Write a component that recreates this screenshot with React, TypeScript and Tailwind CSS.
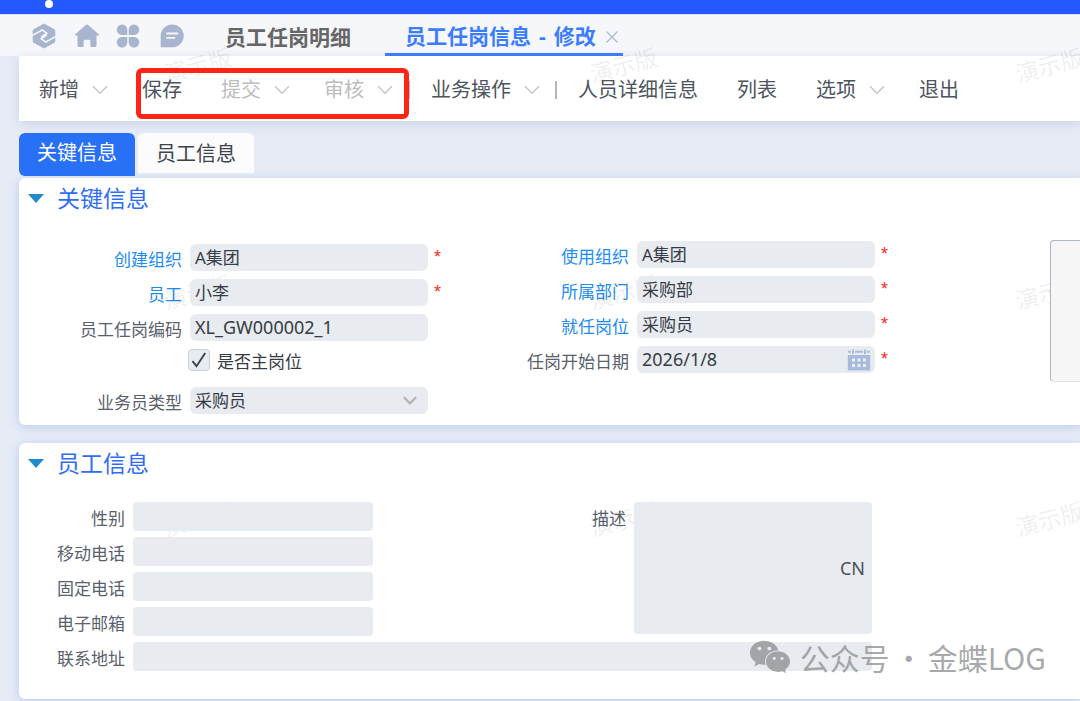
import { useState, type ReactNode } from "react";
import { FaWeixin } from "react-icons/fa";

function SyncIcon() {
  return (
    <svg viewBox="0 0 24 26" className="h-[26px] w-6" aria-hidden="true">
      <path
        d="M11.100.9q.9-.6 1.800 0l9.500 5.300q.9.5.9 1.500v10.600q0 1-.9 1.500l-9.500 5.300q-.9.5-1.800 0l-9.500-5.300q-.9-.5-.9-1.500V7.700q0-1 .9-1.500z"
        fill="currentColor"
      />
      <path
        d="M0 12.500 10.200 7l4.600 3.200-5.600 4M24 13.500 13.800 19l-4.600-3.200 5.600-4"
        fill="none"
        stroke="#f5f7fb"
        strokeWidth="1.500"
      />
    </svg>
  );
}

function HomeIcon() {
  return (
    <svg viewBox="0 0 26 24" className="h-6 w-[26px]" aria-hidden="true">
      <path
        d="M12.100.8q.9-.8 1.800 0l11 9.600q.8.8-.2 1.200h-2.200v10q0 1.400-1.400 1.400h-4.700v-5.800q0-1.400-1.400-1.400h-4q-1.400 0-1.400 1.400V23H4.900q-1.400 0-1.400-1.400v-10H1.300q-1-.4-.2-1.200z"
        fill="currentColor"
      />
    </svg>
  );
}

function AppsIcon() {
  return (
    <svg viewBox="0 0 24 24" className="h-6 w-6" aria-hidden="true">
      <g fill="currentColor">
        <path d="M6 .5a5.300 5.300 0 0 1 5.300 5.300V11H6A5.250 5.250 0 0 1 6 .5z" />
        <path d="M18 .5a5.250 5.250 0 0 1 0 10.500h-5.300V5.800A5.300 5.300 0 0 1 18 .5z" />
        <path d="M6 13h5.300v5.200A5.300 5.300 0 1 1 6 13z" />
        <path d="M12.700 13H18a5.300 5.300 0 1 1-5.300 5.200z" />
      </g>
    </svg>
  );
}

function ChatIcon() {
  return (
    <svg viewBox="0 0 24 24" className="h-6 w-6" aria-hidden="true">
      <path d="M12.300.5a11.300 11.300 0 0 1 0 22.800H2q-1.300 0-1.300-1.300V12A11.500 11.500 0 0 1 12.300.5z" fill="currentColor" />
      <path d="M7 9.500h10.500M7 13.800h7.500" stroke="#f5f7fb" strokeWidth="1.800" strokeLinecap="round" />
    </svg>
  );
}

function Chevron({ className }: { className: string }) {
  return (
    <svg viewBox="0 0 16 10" className={className} aria-hidden="true">
      <path d="M1 1.200 8 8.300 15 1.200" fill="none" stroke="currentColor" />
    </svg>
  );
}

function CalendarIcon() {
  return (
    <svg viewBox="0 0 24 22" className="h-[22px] w-6" aria-hidden="true">
      <path
        d="M1 2.800h3M8 2.800h8M20 2.800h3M6 .5v4.500M18 .5v4.500"
        stroke="#a9bbdc"
        strokeWidth="2"
      />
      <path d="M.8 6h22.400v15.500H.8z" fill="#a9bbdc" />
      <path
        d="M5 9.500h3v3H5zM10.500 9.500h3v3h-3zM16 9.500h3v3h-3zM5 15h3v3H5zM10.500 15h3v3h-3zM16 15h3v3h-3z"
        fill="#eceff4"
      />
    </svg>
  );
}

function ToolButton({
  label,
  menu = false,
  disabled = false,
}: {
  label: string;
  menu?: boolean;
  disabled?: boolean;
}) {
  return (
    <button
      type="button"
      disabled={disabled}
      className={
        "flex shrink-0 items-center gap-[13px] pl-5 " +
        (menu ? "pr-[14px] " : "pr-[19px] ") +
        (disabled ? "text-[#bdbdbd]" : "text-[#4d545e]")
      }
    >
      {label}
      {menu && <Chevron className="h-[10px] w-4 stroke-[1.5] text-[#c3c7d0]" />}
    </button>
  );
}

function Divider() {
  return <span className="mx-px h-[18px] w-[2px] shrink-0 bg-[#b4b6bb]" />;
}

const fieldClass = "h-[27px] w-full rounded-md bg-[#e8ebf0] px-[5px] text-[#363c45] outline-none";

function Field({
  id,
  label,
  labelWidth,
  link = false,
  required = false,
  children,
}: {
  id: string;
  label: string;
  labelWidth: string;
  link?: boolean;
  required?: boolean;
  children: ReactNode;
}) {
  return (
    <div className="flex h-[27px] items-center">
      <label
        htmlFor={id}
        className={
          "mr-2 shrink-0 pt-[3px] text-right whitespace-nowrap " +
          labelWidth +
          (link ? " text-[#1e8cf0]" : " text-[#59616d]")
        }
      >
        {label}
      </label>
      <div className="relative z-10 flex w-[238px] shrink-0 items-center">{children}</div>
      <span className="ml-[6px] w-2 self-start font-['Liberation_Sans',sans-serif] text-[18px] text-[#fb2a1e]">
        {required ? "*" : ""}
      </span>
    </div>
  );
}

function TextField({
  id,
  label,
  value,
  labelWidth,
  link,
  required,
  size = "text-[17px]",
}: {
  id: string;
  label: string;
  value: string;
  labelWidth: string;
  link?: boolean;
  required?: boolean;
  size?: string;
}) {
  return (
    <Field id={id} label={label} labelWidth={labelWidth} link={link} required={required}>
      <input id={id} defaultValue={value} className={fieldClass + " " + size} />
    </Field>
  );
}

function Panel({ title, children }: { title: string; children: ReactNode }) {
  const [open, setOpen] = useState(true);
  return (
    <section className="rounded-l-md bg-white shadow-[0_2px_10px_1px_#c3d1ef]">
      <h2 className="text-[23px] leading-[41px] text-[#2f6df6]">
        <button type="button" aria-expanded={open} onClick={() => setOpen(!open)} className="flex items-center pl-[9px]">
          <svg viewBox="0 0 16 9" className="mr-[13px] h-[9px] w-4" aria-hidden="true">
            <path d="M0 0h16L8 9z" fill="#2189cc" />
          </svg>
          {title}
        </button>
      </h2>
      {open && children}
    </section>
  );
}

const contactRows = [
  { id: "gender", label: "性别" },
  { id: "mobile", label: "移动电话" },
  { id: "phone", label: "固定电话" },
  { id: "email", label: "电子邮箱" },
];

const contactLabel = "mr-2 w-[106px] shrink-0 pt-1 text-right text-[#59616d]";
const contactInput = "relative z-10 h-[29px] rounded bg-[#e8ebf0] px-[5px] outline-none";

export default function App() {
  return (
    <div className="relative min-h-screen overflow-hidden bg-[#e6ebf6] font-['Noto_Sans','Noto_Sans_CJK_SC',sans-serif] text-[17px] leading-[27px]">
      <div className="h-[14px] bg-[#2459ff] pl-[45px]">
        <div className="h-2 w-2 rounded-full bg-white" />
      </div>

      <header className="flex h-[42px] items-stretch border-t border-[#dbe4fb] bg-[#f5f7fb]">
        <nav className="flex items-center pl-8 text-[#a9b5cf]">
          <button type="button" aria-label="同步" className="mr-[18px]"><SyncIcon /></button>
          <button type="button" aria-label="主页" className="mr-4"><HomeIcon /></button>
          <button type="button" aria-label="应用" className="mr-5"><AppsIcon /></button>
          <button type="button" aria-label="消息"><ChatIcon /></button>
        </nav>
        <div className="ml-[41px] flex whitespace-nowrap text-[21px] font-bold">
          <button type="button" className="pt-[3px] pr-[34px] text-[#666666]">员工任岗明细</button>
          <div className="flex items-center border-b-[3px] border-[#3b7dfd] pt-[5px] pr-[5px] pl-5 text-[#3b7dfd]">
            <button type="button" className="flex gap-2">
              <span>员工任岗信息</span>
              <span>-</span>
              <span>修改</span>
            </button>
            <button type="button" aria-label="关闭" className="ml-[10px] text-[#b3bccd]">
              <svg viewBox="0 0 12 12" className="h-3 w-3" aria-hidden="true">
                <path d="M.5.5l11 11M11.500.5l-11 11" stroke="currentColor" strokeWidth="1.400" />
              </svg>
            </button>
          </div>
        </div>
      </header>

      <div className="pl-[19px]">
        <div className="flex h-[65px] items-center bg-white pt-[2px] text-[20px] shadow-[0_3px_10px_#cdd3e6]">
          <ToolButton label="新增" menu />
          <div className="relative flex">
            <ToolButton label="保存" />
            <ToolButton label="提交" menu disabled />
            <ToolButton label="审核" menu disabled />
            <div className="pointer-events-none absolute -top-2 -right-[2px] left-[14px] z-20 h-[51px] rounded-md border-[5px] border-[#ff2416]" />
          </div>
          <Divider />
          <ToolButton label="业务操作" menu />
          <Divider />
          <ToolButton label="人员详细信息" />
          <ToolButton label="列表" />
          <ToolButton label="选项" menu />
          <ToolButton label="退出" />
        </div>

        <div className="flex items-start gap-[3px] pt-3 pb-[2px] text-[20px]">
          <button type="button" className="h-[43px] rounded-t-md rounded-bl-md bg-[#2871f7] px-[18px] pb-1 text-white">
            关键信息
          </button>
          <button type="button" className="h-10 rounded-t-md bg-[#fcfcfd] px-[18px] text-[#3d424a]">
            员工信息
          </button>
        </div>

        <Panel title="关键信息">
          <div className="flex items-start pt-[21px] pb-[11px]">
            <div className="flex flex-col gap-2 pt-1">
              <TextField id="createOrg" label="创建组织" value="A集团" labelWidth="w-[163px]" link required />
              <TextField id="employee" label="员工" value="小李" labelWidth="w-[163px]" link required />
              <TextField id="postCode" label="员工任岗编码" value="XL_GW000002_1" labelWidth="w-[163px]" size="text-[18px]" />
              <div className="flex h-[22px] items-center pl-[169px]">
                <span className="relative z-10 mr-[7px] flex">
                  <input
                    id="mainPost"
                    type="checkbox"
                    defaultChecked
                    className="peer h-[22px] w-[22px] appearance-none rounded border border-[#ccd1da] bg-[#e8ebf0]"
                  />
                  <svg viewBox="0 0 22 22" className="pointer-events-none absolute inset-0 hidden peer-checked:block" aria-hidden="true">
                    <path d="M4.500 12.200 8.500 17.200 17.200 4" fill="none" stroke="#3c424b" strokeWidth="1.900" />
                  </svg>
                </span>
                <label htmlFor="mainPost" className="pt-[3px] text-[#363c45]">是否主岗位</label>
              </div>
              <div className="pt-2">
                <Field id="salesType" label="业务员类型" labelWidth="w-[163px]">
                  <select id="salesType" className={fieldClass + " appearance-none"}>
                    <option>采购员</option>
                  </select>
                  <Chevron className="pointer-events-none absolute right-[11px] h-[9px] w-[14px] stroke-[2.5] text-[#b0b3b9]" />
                </Field>
              </div>
            </div>

            <div className="ml-[75px] flex flex-col gap-2 pt-px">
              <TextField id="useOrg" label="使用组织" value="A集团" labelWidth="w-28" link required />
              <TextField id="dept" label="所属部门" value="采购部" labelWidth="w-28" link required />
              <TextField id="post" label="就任岗位" value="采购员" labelWidth="w-28" link required />
              <Field id="startDate" label="任岗开始日期" labelWidth="w-28" required>
                <input id="startDate" defaultValue="2026/1/8" className={fieldClass + " text-[18px]"} />
                <button type="button" aria-label="选择日期" className="absolute right-1">
                  <CalendarIcon />
                </button>
              </Field>
            </div>

            <div className="relative z-10 ml-[161px] h-[142px] flex-1 rounded-l border border-r-0 border-t-[#aeb5ca] border-b-[#e2e4e8] border-l-[#aeb5ca] bg-[#f6f6f7]" />
          </div>
        </Panel>

        <div className="h-[18px]" />

        <Panel title="员工信息">
          <div className="w-[853px] pt-[18px] pb-7">
            <div className="flex items-start justify-between">
              <div className="flex flex-col gap-[6px]">
                {contactRows.map((row) => (
                  <div key={row.id} className="flex h-[29px] items-center">
                    <label htmlFor={row.id} className={contactLabel}>{row.label}</label>
                    <input id={row.id} className={contactInput + " w-[240px]"} />
                  </div>
                ))}
              </div>
              <div className="flex">
                <label htmlFor="desc" className="mr-2 pt-[3px] text-[#59616d]">描述</label>
                <div className="relative z-10 flex">
                  <textarea id="desc" className="h-[132px] w-[238px] resize-none rounded bg-[#e8ebf0] p-[5px] outline-none" />
                  <span className="absolute top-[53px] right-[7px] text-[18px] text-[#4b515b]">CN</span>
                </div>
              </div>
            </div>
            <div className="mt-[6px] flex h-[29px] items-center">
              <label htmlFor="address" className={contactLabel}>联系地址</label>
              <input id="address" className={contactInput + " flex-1"} />
            </div>
          </div>
        </Panel>
      </div>

      <div
        aria-hidden="true"
        className="pointer-events-none absolute inset-0 grid auto-rows-[227px] grid-cols-[426px_426px_426px] overflow-hidden pt-[52px] pl-[163px] text-[23px] text-black/8"
      >
        {Array.from({ length: 9 }, (_, i) => (
          <span key={i} className="w-[69px] -rotate-15 justify-self-start self-start">演示版</span>
        ))}
      </div>

      <div className="pointer-events-none absolute right-[34px] bottom-[22px] z-20 flex items-center gap-[9px] font-['Noto_Sans_CJK_SC',sans-serif] text-[30px] leading-[44px] whitespace-nowrap text-[#8b8d90]/75">
        <FaWeixin className="h-[42px] w-[42px]" />
        <span className="flex gap-1">
          <span>公众号</span>
          <span>·</span>
          <span>金蝶LOG</span>
        </span>
      </div>
    </div>
  );
}
